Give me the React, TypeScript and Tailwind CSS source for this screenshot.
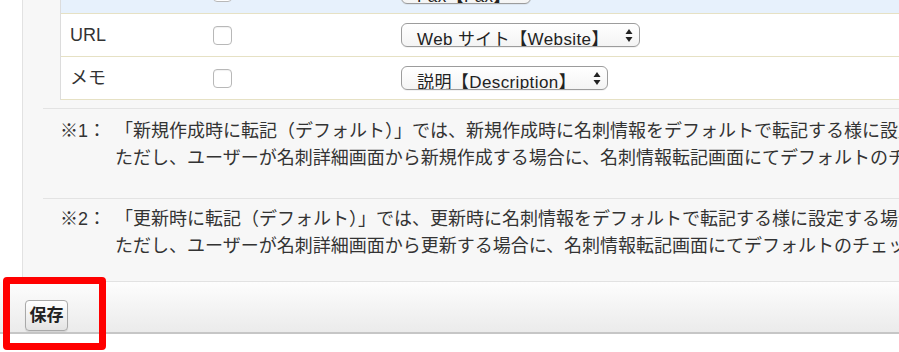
import React from 'react'

const jp = "font-['Liberation_Sans','Noto_Sans_CJK_JP',sans-serif]"

const Arrows: React.FC = () => (
  <svg width="8" height="13" viewBox="0 0 8 13" className="shrink-0">
    <path d="M4 0 L7.5 5 L0.5 5 Z" fill="#222" />
    <path d="M4 13 L7.5 8 L0.5 8 Z" fill="#222" />
  </svg>
)

const Select: React.FC<{ label: string; width: string }> = ({ label, width }) => (
  <div
    className={`${width} h-[24px] rounded-[6px] border border-[#9c9c9c] bg-gradient-to-b from-white to-[#f4f4f4] flex items-start justify-between pl-[15px] pr-[6px] overflow-hidden shadow-[0_1px_0_rgba(0,0,0,0.05)]`}
  >
    <span className="text-[17px] leading-[17px] tracking-[0.4px] pt-[7px] text-[#222] whitespace-nowrap">{label}</span>
    <div className="pt-[5px]">
      <Arrows />
    </div>
  </div>
)

const Checkbox: React.FC = () => (
  <div className="w-[19px] h-[19px] rounded-[4px] border border-[#b8b8b8] bg-white shadow-[inset_0_1px_1px_rgba(0,0,0,0.06)]" />
)

const Row: React.FC<{ label: string; select: string; width: string; blue?: boolean }> = ({
  label,
  select,
  width,
  blue
}) => (
  <div
    className={`h-[43px] flex items-center border-b border-[#e6e1c4] ${blue ? 'bg-[#e7f1fc]' : 'bg-white'}`}
  >
    <div className="w-[152px] pl-[9px] text-[18px] text-[#333]">{label}</div>
    <div className="w-[188px] flex items-center">
      <Checkbox />
    </div>
    <Select label={select} width={width} />
  </div>
)

const Note: React.FC<{ mark: string; line1: string; line2: string; className?: string }> = ({
  mark,
  line1,
  line2,
  className
}) => (
  <div className={`flex pl-[17px] text-[18px] leading-[27px] text-[#333] whitespace-nowrap ${className}`}>
    <div className="w-[55px] shrink-0">{mark}</div>
    <div>
      <div>{line1}</div>
      <div>{line2}</div>
    </div>
  </div>
)

export default function App() {
  return (
    <div className={`relative w-[899px] h-[352px] overflow-hidden bg-white ${jp}`}>
      {/* settings panel */}
      <div className="ml-[22px] border-l border-b border-[#e2e2e2] bg-[#f7f7f7] h-[282px] overflow-hidden">
        <div className="ml-[37px] h-[100px] overflow-hidden">
          <div className="-mt-[29px] border-l border-b border-[#dcdcdc]">
            <Row label="FAX" select="Fax【Fax】" width="w-[130px]" blue />
            <Row label="URL" select="Web サイト【Website】" width="w-[239px]" />
            <div className="-mb-px">
              <Row label="メモ" select="説明【Description】" width="w-[207px]" />
            </div>
          </div>
        </div>

        <div className="ml-[20px] mt-[8px] border-t border-[#e3e3e3]">
          <Note
            className="pt-[9px] pb-[26px]"
            mark="※1："
            line1="「新規作成時に転記（デフォルト）」では、新規作成時に名刺情報をデフォルトで転記する様に設定します。"
            line2="ただし、ユーザーが名刺詳細画面から新規作成する場合に、名刺情報転記画面にてデフォルトのチェックを外すことができます。"
          />
          <div className="border-t border-[#e3e3e3]">
            <Note
              className="pt-[7px]"
              mark="※2："
              line1="「更新時に転記（デフォルト）」では、更新時に名刺情報をデフォルトで転記する様に設定する場合にチェックします。"
              line2="ただし、ユーザーが名刺詳細画面から更新する場合に、名刺情報転記画面にてデフォルトのチェックを外すことができます。"
            />
          </div>
        </div>
      </div>

      {/* footer with save button */}
      <div className="h-[52px] bg-gradient-to-b from-[#fdfdfd] to-[#ebebeb] border-b-2 border-[#c6c6c6] pl-[25px] pt-[18px]">
        <button className="w-[43px] h-[31px] rounded-[4px] border border-[#a9a9a9] bg-gradient-to-b from-white to-[#e4e4e4] text-[17px] font-bold text-[#222] flex items-center justify-center shadow-[0_1px_1px_rgba(0,0,0,0.1)]">
          保存
        </button>
      </div>

      {/* annotation highlight */}
      <div className="absolute left-[3px] top-[277px] w-[103px] h-[73px] border-[7px] border-[#ff0000] rounded-[4px]" />
    </div>
  )
}
